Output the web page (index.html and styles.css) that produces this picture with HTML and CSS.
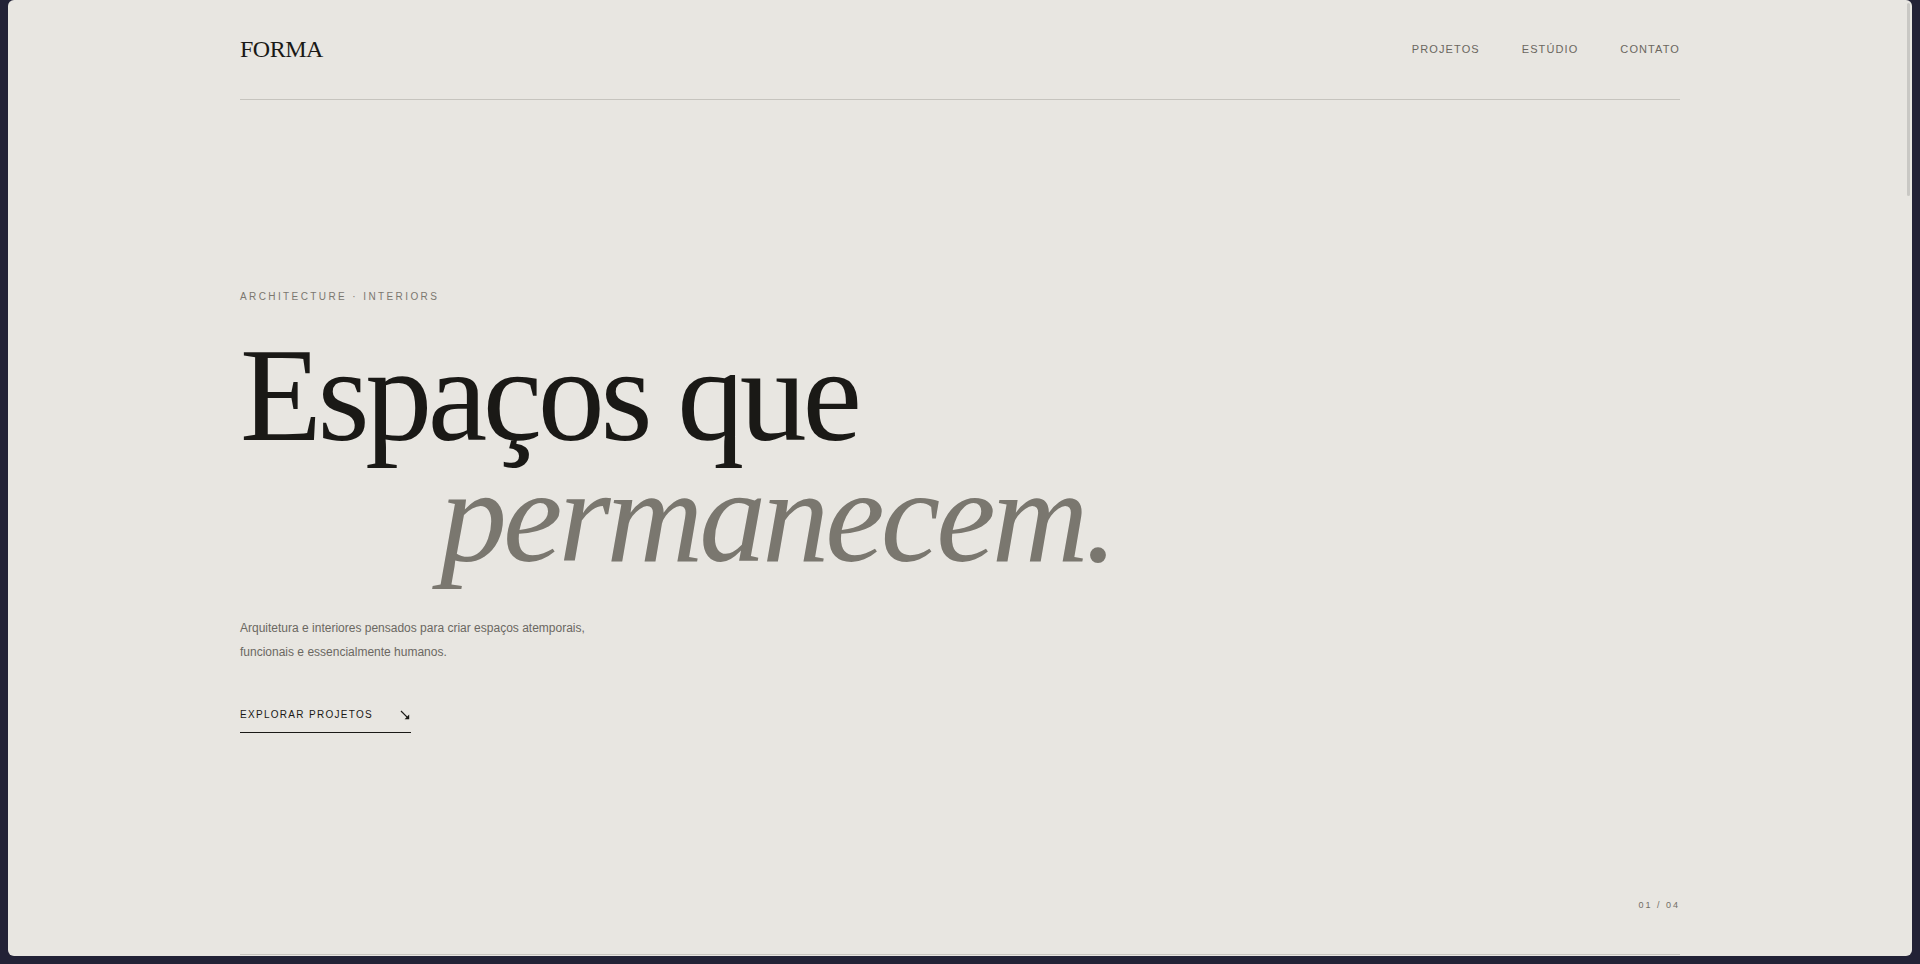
FILE: index.html
```html
<!DOCTYPE html>
<html lang="pt">
<head>
<meta charset="utf-8">
<title>FORMA — Arquitetura e Interiores</title>
<link rel="stylesheet" href="styles.css">
</head>
<body>
<div class="panel">
  <div class="page">
    <header class="header">
      <div class="logo">FORMA</div>
      <nav class="nav">
        <a class="nav-link" href="#">PROJETOS</a>
        <a class="nav-link" href="#">ESTÚDIO</a>
        <a class="nav-link" href="#">CONTATO</a>
      </nav>
    </header>
    <section class="hero">
      <p class="eyebrow">ARCHITECTURE · INTERIORS</p>
      <h1 class="title">
        <span class="title-line title-main">Espaços que</span>
        <em class="title-line title-indent">permanecem.</em>
      </h1>
      <p class="lead">Arquitetura e interiores pensados para criar espaços atemporais, funcionais e essencialmente humanos.</p>
      <a class="cta" href="#">
        <span class="cta-text">EXPLORAR PROJETOS</span>
        <svg class="cta-arrow" width="12" height="12" viewBox="0 0 12 12" aria-hidden="true">
          <path d="M2 2 L8.6 8.6" stroke="#1a1916" stroke-width="1.2" fill="none"/>
          <path d="M10.2 10.2 L10.2 5.6 L5.6 10.2 Z" fill="#1a1916"/>
        </svg>
      </a>
      <div class="counter">01 / 04</div>
    </section>
  </div>
  <div class="scroll-thumb"></div>
</div>
</body>
</html>
```
FILE: styles.css
```css
* { box-sizing: border-box; }

html, body {
  margin: 0;
  padding: 0;
  height: 100%;
}

body {
  background: #222236;
  overflow: hidden;
  font-family: "Liberation Sans", Arial, sans-serif;
}

.panel {
  position: relative;
  width: 1904px;
  height: 956px;
  margin: 0 8px;
  background: #e8e6e1;
  border-radius: 6px;
  overflow: hidden;
}

.page {
  width: 1440px;
  margin-left: 232px;
}

.header {
  display: flex;
  align-items: center;
  justify-content: space-between;
  padding: 37px 0 38px;
  border-bottom: 1px solid #c6c4be;
}

.logo {
  font-family: "Liberation Serif", "Times New Roman", serif;
  font-size: 24px;
  line-height: 24px;
  letter-spacing: -0.02em;
  color: #1a1916;
}

.nav {
  display: flex;
  gap: 42px;
}

.nav-link {
  font-size: 11px;
  line-height: 14px;
  letter-spacing: 0.1em;
  color: #6b675f;
  text-decoration: none;
}

.hero {
  height: 855px;
  display: flex;
  flex-direction: column;
  align-items: flex-start;
  padding-top: 189px;
  padding-bottom: 43px;
  border-bottom: 1px solid #c6c4be;
}

.eyebrow {
  margin: 0;
  font-size: 10px;
  line-height: 16px;
  letter-spacing: 0.24em;
  color: #7b776f;
}

.title {
  margin: 30px 0 0;
  font-family: "Liberation Serif", "Times New Roman", serif;
  font-weight: normal;
  font-size: 134px;
  line-height: 0.9;
  letter-spacing: -0.03em;
  color: #1a1916;
}

.title-line {
  display: block;
}

.title-main {
  letter-spacing: -0.033em;
}

.title-indent {
  font-style: italic;
  color: #7a776f;
  padding-left: 200px;
}

.lead {
  margin: 41px 0 0;
  max-width: 360px;
  font-size: 12px;
  line-height: 23.4px;
  color: #6b6861;
}

.cta {
  display: inline-flex;
  align-items: center;
  gap: 26px;
  margin-top: 44px;
  padding-bottom: 10px;
  border-bottom: 1px solid #1a1916;
  text-decoration: none;
  color: #1a1916;
}

.cta-text {
  font-size: 10px;
  line-height: 14px;
  letter-spacing: 0.13em;
}

.cta-arrow {
  display: block;
}

.counter {
  margin-top: auto;
  align-self: flex-end;
  font-size: 9px;
  line-height: 12px;
  letter-spacing: 0.22em;
  color: #726e66;
}

.scroll-thumb {
  position: absolute;
  top: 3px;
  right: 2px;
  width: 3px;
  height: 193px;
  border-radius: 2px;
  background: #c9c8c4;
}
```
